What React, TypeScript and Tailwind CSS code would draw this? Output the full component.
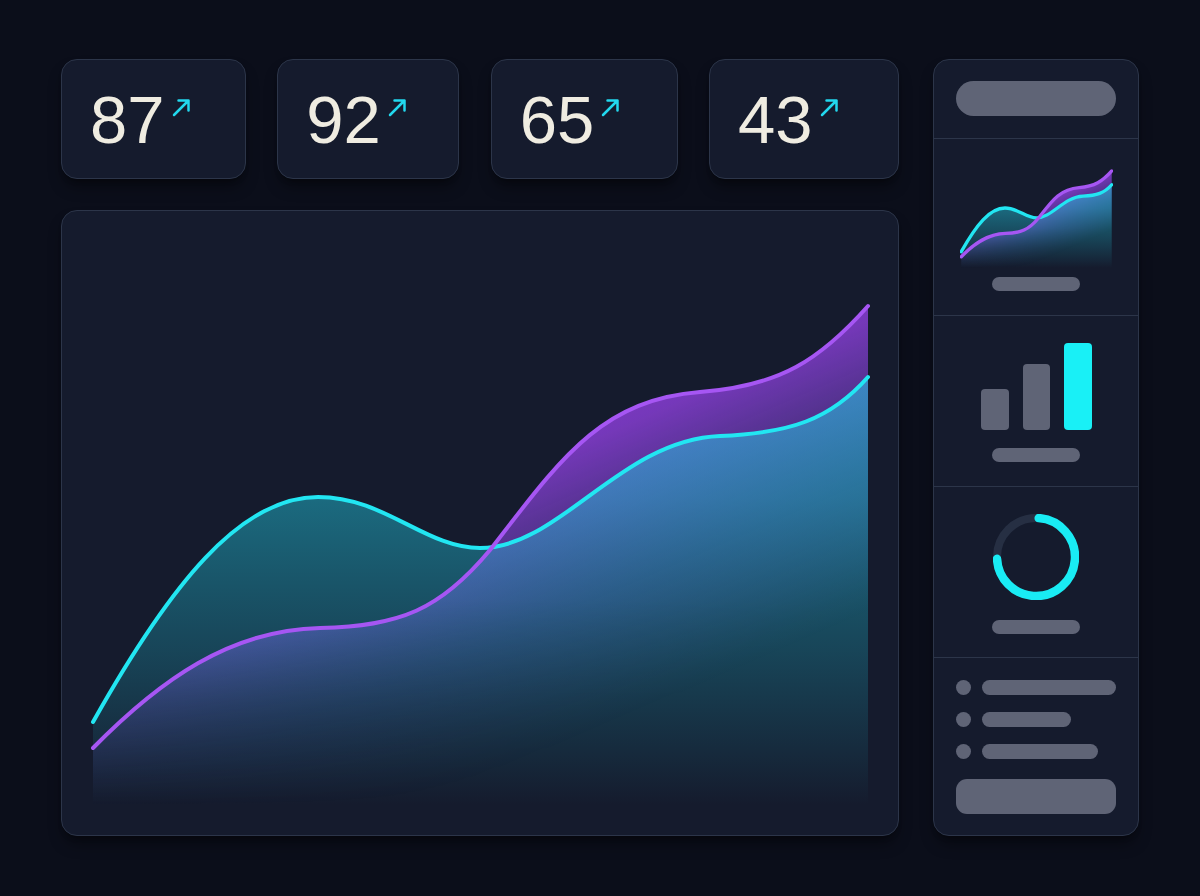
import React from 'react';

const CYAN_D =
  'M93 722 C170 585 240 497 318 497 C385 497 425 548 480 548 C560 548 620 440 720 436 C790 433 830 420 868 377';
const PURPLE_D =
  'M93 748 C160 680 230 630 320 628 C400 626 440 610 490 550 C560 460 600 400 700 392 C780 386 820 360 868 306';
const CLOSE = ' L868 810 L93 810 Z';

const stats = ['87', '92', '65', '43'];
const statWidths = ['w-[185px]', 'w-[182px]', 'w-[187px]', 'w-[190px]'];

function AreaChart({
  id,
  stroke,
  viewBox,
  className,
}: {
  id: string;
  stroke: number;
  viewBox: string;
  className?: string;
}) {
  return (
    <svg className={className} viewBox={viewBox}>
      <defs>
        <linearGradient id={`${id}-p`} gradientUnits="userSpaceOnUse" x1="340" y1="492" x2="468" y2="786">
          <stop offset="0" stopColor="#8b3fd9" stopOpacity="0.9" />
          <stop offset="0.16" stopColor="#8b3fd9" stopOpacity="0.82" />
          <stop offset="0.47" stopColor="#7b45d0" stopOpacity="0.48" />
          <stop offset="0.62" stopColor="#6a4ac8" stopOpacity="0.34" />
          <stop offset="0.94" stopColor="#6a4ac8" stopOpacity="0.04" />
          <stop offset="1" stopColor="#6a4ac8" stopOpacity="0" />
        </linearGradient>
        <linearGradient id={`${id}-fade`} gradientUnits="userSpaceOnUse" x1="0" y1="600" x2="0" y2="805">
          <stop offset="0" stopColor="#fff" stopOpacity="1" />
          <stop offset="0.5" stopColor="#fff" stopOpacity="0.45" />
          <stop offset="1" stopColor="#fff" stopOpacity="0" />
        </linearGradient>
        <mask id={`${id}-m`} maskUnits="userSpaceOnUse" x="0" y="0" width="1000" height="1000">
          <rect x="0" y="0" width="1000" height="1000" fill={`url(#${id}-fade)`} />
        </mask>
        <linearGradient id={`${id}-c`} gradientUnits="userSpaceOnUse" x1="0" y1="380" x2="0" y2="805">
          <stop offset="0" stopColor="#22d3ee" stopOpacity="0.52" />
          <stop offset="0.28" stopColor="#22c8e0" stopOpacity="0.46" />
          <stop offset="0.64" stopColor="#1fb5cc" stopOpacity="0.27" />
          <stop offset="0.9" stopColor="#1fb5cc" stopOpacity="0.08" />
          <stop offset="1" stopColor="#1fb5cc" stopOpacity="0" />
        </linearGradient>
      </defs>
      <path d={PURPLE_D + CLOSE} fill={`url(#${id}-p)`} mask={`url(#${id}-m)`} />
      <path d={CYAN_D + CLOSE} fill={`url(#${id}-c)`} />
      <path d={CYAN_D} fill="none" stroke="#22e6f2" strokeWidth={stroke} strokeLinecap="round" />
      <path d={PURPLE_D} fill="none" stroke="#a656f3" strokeWidth={stroke} strokeLinecap="round" />
    </svg>
  );
}

function StatCard({ value, width }: { value: string; width: string }) {
  return (
    <div
      className={`${width} h-[120px] flex items-center pl-7 rounded-2xl border border-[#2c3549] bg-[#151b2d] shadow-lg shadow-black/40`}
    >
      <div className="flex items-start">
        <span className="text-[67px] leading-none text-[#efece1] font-['Liberation_Sans',Arial,sans-serif]">
          {value}
        </span>
        <svg className="ml-[6px] mt-[11px]" width="21" height="21" viewBox="0 0 21 21" fill="none">
          <path
            d="M3 18 L17.5 3.5 M7.5 3.5 H17.5 V13.5"
            stroke="#22d8ee"
            strokeWidth="2.5"
            strokeLinecap="round"
            strokeLinejoin="round"
          />
        </svg>
      </div>
    </div>
  );
}

const pill = 'rounded-full bg-[#5f6476]';

export default function App() {
  const circ = 2 * Math.PI * 39;
  return (
    <div className="w-[1200px] h-[896px] bg-[#0b0e1a] flex gap-[34px] pl-[61px] pt-[59px]">
      {/* left column */}
      <div className="w-[838px] flex flex-col gap-[31px]">
        <div className="flex justify-between">
          {stats.map((s, i) => (
            <StatCard key={s} value={s} width={statWidths[i]} />
          ))}
        </div>
        <div className="h-[626px] rounded-2xl border border-[#2c3549] bg-[#151b2d] shadow-lg shadow-black/40 overflow-hidden">
          <AreaChart id="main" stroke={4} viewBox="62 211 836 624" className="block w-[836px] h-[624px]" />
        </div>
      </div>

      {/* right panel */}
      <div className="w-[206px] h-[777px] flex flex-col rounded-2xl border border-[#2c3549] bg-[#151b2d] shadow-lg shadow-black/40 divide-y divide-[#2c3549] overflow-hidden">
        <div className="px-[22px] pt-[21px] pb-[22px]">
          <div className={`h-[35px] ${pill}`} />
        </div>

        <div className="flex flex-col items-center pt-[30px] pb-[24px]">
          <AreaChart id="mini" stroke={17} viewBox="88 296 785 510" className="block w-[153px] h-[99px]" />
          <div className={`mt-[9px] w-[88px] h-[14px] ${pill}`} />
        </div>

        <div className="flex flex-col items-center pt-[27px] pb-[24px]">
          <div className="flex items-end gap-[14px] h-[87px]">
            <div className="w-[28px] h-[41px] rounded-[4px] bg-[#5f6476]" />
            <div className="w-[27px] h-[66px] rounded-[4px] bg-[#5f6476]" />
            <div className="w-[28px] h-[87px] rounded-[4px] bg-[#19f0f6]" />
          </div>
          <div className={`mt-[18px] w-[88px] h-[14px] ${pill}`} />
        </div>

        <div className="flex flex-col items-center pt-[27px] pb-[23px]">
          <svg width="86" height="86" viewBox="0 0 86 86">
            <circle cx="43" cy="43" r="39" fill="none" stroke="#262f43" strokeWidth="8" />
            <circle
              cx="43"
              cy="43"
              r="39"
              fill="none"
              stroke="#19ecf4"
              strokeWidth="8.5"
              strokeLinecap="round"
              strokeDasharray={`${circ * 0.73} ${circ}`}
              transform="rotate(-86 43 43)"
            />
          </svg>
          <div className={`mt-[20px] w-[88px] h-[14px] ${pill}`} />
        </div>

        <div className="flex flex-col px-[22px] pt-[22px] pb-[21px]">
          <div className="flex flex-col gap-[17px]">
            {[134, 89, 116].map((w) => (
              <div key={w} className="flex items-center gap-[11px]">
                <div className="w-[15px] h-[15px] rounded-full bg-[#5f6476]" />
                <div className={`h-[15px] ${pill}`} style={{ width: w }} />
              </div>
            ))}
          </div>
          <div className="mt-[20px] h-[35px] rounded-[11px] bg-[#5f6476]" />
        </div>
      </div>
    </div>
  );
}
